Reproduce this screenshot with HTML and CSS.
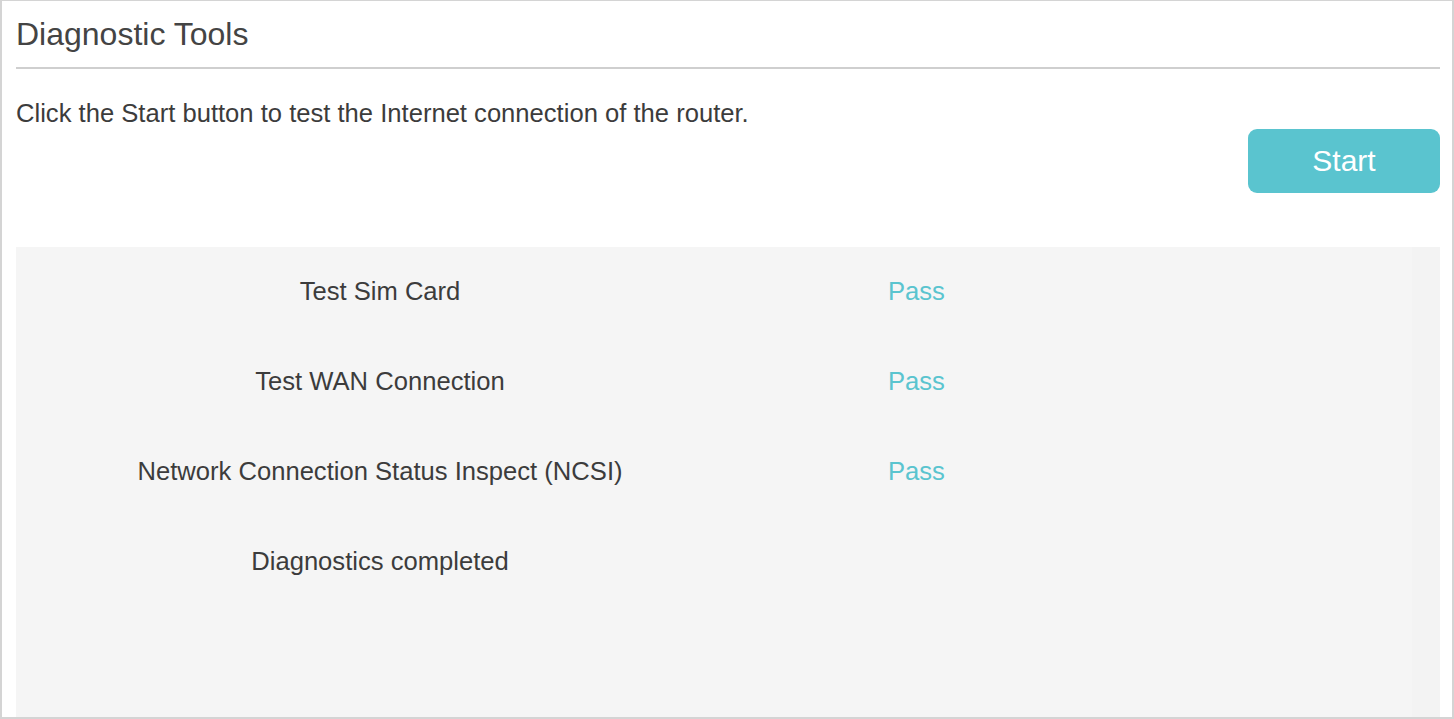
FILE: index.html
```html
<!DOCTYPE html>
<html lang="en">
<head>
  <meta charset="UTF-8">
  <meta name="viewport" content="width=device-width, initial-scale=1.0">
  <title>Diagnostic Tools</title>
  <link rel="stylesheet" href="styles.css">
</head>
<body>
  <div class="container">
    <h1 class="title">Diagnostic Tools</h1>
    <p class="intro">Click the Start button to test the Internet connection of the router.</p>
    <div class="actions">
      <button type="button" class="button">Start</button>
    </div>

    <div class="results">
      <div class="row">
        <div class="label">Test Sim Card</div>
        <div class="value">Pass</div>
      </div>
      <div class="row">
        <div class="label">Test WAN Connection</div>
        <div class="value">Pass</div>
      </div>
      <div class="row">
        <div class="label">Network Connection Status Inspect (NCSI)</div>
        <div class="value">Pass</div>
      </div>
      <div class="row">
        <div class="label">Diagnostics completed</div>
        <div class="value"></div>
      </div>
    </div>
  </div>
</body>
</html>
```

FILE: styles.css
```css
html, body {
  margin: 0;
  padding: 0;
  background-color: white;
}
body {
  font-family: "Liberation Sans", Arial, sans-serif;
  color: #3c3c3c;
}
.container {
  display: flex;
  flex-direction: column;
  height: 719px;
  box-sizing: border-box;
  padding: 14px 12px 0 14px;
  border: 2px solid #d4d4d4;
  border-top-width: 1px;
  overflow: hidden;
}
.title {
  margin: 0;
  padding-bottom: 14px;
  border-bottom: 2px solid #cfcfcf;
  font-size: 32px;
  font-weight: normal;
  line-height: 38px;
  color: #444;
}
.intro {
  margin: 29px 0 0;
  font-size: 25.6px;
  line-height: 30px;
}
.actions {
  display: flex;
  justify-content: flex-end;
  margin-top: 1px;
}
.button {
  width: 192px;
  height: 64px;
  background-color: #5ac4cf;
  color: white;
  border: none;
  border-radius: 9px;
  font-family: inherit;
  font-size: 30px;
  cursor: pointer;
}
.button:hover {
  background-color: #4ab5c0;
}
.results {
  flex: 1;
  margin-top: 54px;
  background: linear-gradient(to right, #f5f5f5 calc(100% - 28px), #f3f3f3 0);
}
.row {
  display: grid;
  grid-template-columns: 728px 1fr;
  padding: 29px 0 31px;
  font-size: 25.6px;
  line-height: 30px;
}
.label {
  text-align: center;
}
.value {
  padding-left: 144px;
  color: #5ac4cf;
}
```
